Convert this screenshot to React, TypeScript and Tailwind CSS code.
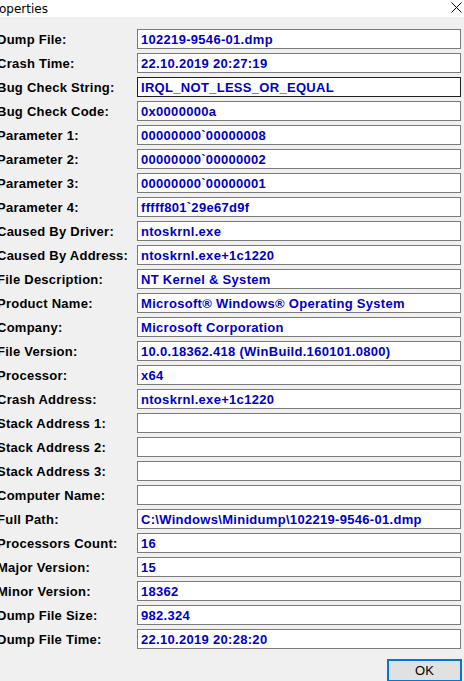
const ROWS: [string, string][] = [
  ["Dump File:", "102219-9546-01.dmp"],
  ["Crash Time:", "22.10.2019 20:27:19"],
  ["Bug Check String:", "IRQL_NOT_LESS_OR_EQUAL"],
  ["Bug Check Code:", "0x0000000a"],
  ["Parameter 1:", "00000000`00000008"],
  ["Parameter 2:", "00000000`00000002"],
  ["Parameter 3:", "00000000`00000001"],
  ["Parameter 4:", "fffff801`29e67d9f"],
  ["Caused By Driver:", "ntoskrnl.exe"],
  ["Caused By Address:", "ntoskrnl.exe+1c1220"],
  ["File Description:", "NT Kernel & System"],
  ["Product Name:", "Microsoft® Windows® Operating System"],
  ["Company:", "Microsoft Corporation"],
  ["File Version:", "10.0.18362.418 (WinBuild.160101.0800)"],
  ["Processor:", "x64"],
  ["Crash Address:", "ntoskrnl.exe+1c1220"],
  ["Stack Address 1:", ""],
  ["Stack Address 2:", ""],
  ["Stack Address 3:", ""],
  ["Computer Name:", ""],
  ["Full Path:", "C:\\Windows\\Minidump\\102219-9546-01.dmp"],
  ["Processors Count:", "16"],
  ["Major Version:", "15"],
  ["Minor Version:", "18362"],
  ["Dump File Size:", "982.324"],
  ["Dump File Time:", "22.10.2019 20:28:20"],
];

export default function App() {
  return (
    <div className="w-[464px] h-[681px] overflow-hidden bg-[#f0f0f0] flex flex-col font-['Liberation_Sans',Arial,sans-serif]">
      {/* title bar, window is cropped on the left */}
      <div className="h-[17px] bg-white flex items-center justify-between shrink-0">
        <span className="text-[12px] text-black ml-[-1px] font-['DejaVu_Sans','Liberation_Sans',sans-serif] leading-none">
          operties
        </span>
        <svg width="11" height="11" viewBox="0 0 11 11" className="mr-[2px] mt-[-2px]">
          <path d="M0.5 0.5 L10.5 10.5 M10.5 0.5 L0.5 10.5" stroke="#000" strokeWidth="1" />
        </svg>
      </div>

      <div className="flex flex-col gap-1 pt-3">
        {ROWS.map(([label, value]) => (
          <div key={label} className="flex items-center h-5">
            <span className="w-[140px] shrink-0 ml-[-3px] text-[13px] font-bold tracking-[0.25px] text-black whitespace-nowrap leading-none">
              {label}
            </span>
            <div
              className={
                label === "Bug Check String:"
                  ? "w-[324px] h-5 bg-white border border-[#1e1e1e] flex items-center pl-[3px]"
                  : "w-[324px] h-5 bg-white border border-[#7a7a7a] flex items-center pl-[3px]"
              }
            >
              <span className="text-[13px] font-bold tracking-[0.3px] text-[#0000c8] whitespace-nowrap leading-none">
                {value}
              </span>
            </div>
          </div>
        ))}
      </div>

      <div className="flex justify-end pt-[10px] pr-[2px]">
        <button
          type="button"
          className="w-[75px] h-[23px] bg-[#e1e1e1] border-2 border-[#0078d7] text-[13px] text-black leading-none"
        >
          OK
        </button>
      </div>
    </div>
  );
}
